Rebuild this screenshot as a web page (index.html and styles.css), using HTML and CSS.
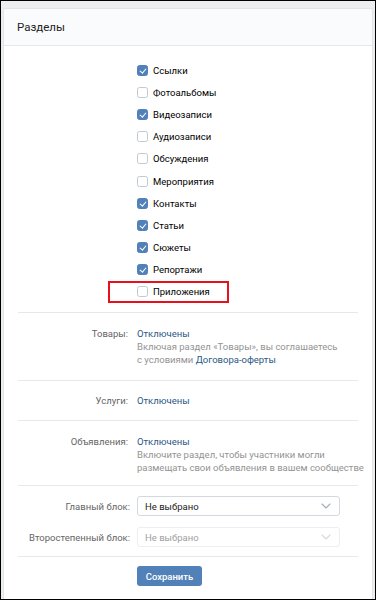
FILE: index.html
```html
<!DOCTYPE html>
<html lang="ru">
<head>
<meta charset="utf-8">
<title>Разделы</title>
<link rel="stylesheet" href="styles.css">
</head>
<body>
<div class="frame">
  <div class="card">
    <div class="card-header">Разделы</div>

    <div class="sections">
      <label class="row"><span class="cb on"></span>Ссылки</label>
      <label class="row"><span class="cb"></span>Фотоальбомы</label>
      <label class="row"><span class="cb on"></span>Видеозаписи</label>
      <label class="row"><span class="cb"></span>Аудиозаписи</label>
      <label class="row"><span class="cb"></span>Обсуждения</label>
      <label class="row"><span class="cb"></span>Мероприятия</label>
      <label class="row"><span class="cb on"></span>Контакты</label>
      <label class="row"><span class="cb on"></span>Статьи</label>
      <label class="row"><span class="cb on"></span>Сюжеты</label>
      <label class="row"><span class="cb on"></span>Репортажи</label>
      <label class="row marked"><span class="cb"></span>Приложения<span class="highlight"></span></label>
    </div>

    <div class="divider"></div>

    <div class="info">
      <div class="label">Товары:</div>
      <div class="value">
        <a class="link">Отключены</a>
        <div class="desc">Включая раздел «Товары», вы соглашаетесь<br>с условиями <a class="link">Договора-оферты</a></div>
      </div>
    </div>

    <div class="divider"></div>

    <div class="info compact">
      <div class="label">Услуги:</div>
      <div class="value"><a class="link">Отключены</a></div>
    </div>

    <div class="divider"></div>

    <div class="info last">
      <div class="label">Объявления:</div>
      <div class="value">
        <a class="link">Отключены</a>
        <div class="desc">Включите раздел, чтобы участники могли<br>размещать свои объявления в вашем сообществе</div>
      </div>
    </div>

    <div class="divider"></div>

    <div class="blocks">
      <div class="field">
        <div class="label">Главный блок:</div>
        <div class="select">Не выбрано<svg class="chev" viewBox="0 0 10 6" width="10" height="6"><path d="M1 1l4 4 4-4" fill="none" stroke="currentColor" stroke-width="1.1" stroke-linecap="round" stroke-linejoin="round"/></svg></div>
      </div>
      <div class="field">
        <div class="label">Второстепенный блок:</div>
        <div class="select disabled">Не выбрано<svg class="chev" viewBox="0 0 10 6" width="10" height="6"><path d="M1 1l4 4 4-4" fill="none" stroke="currentColor" stroke-width="1.1" stroke-linecap="round" stroke-linejoin="round"/></svg></div>
      </div>
    </div>

    <div class="divider"></div>

    <div class="actions">
      <button class="btn">Сохранить</button>
    </div>
  </div>
</div>
</body>
</html>
```

FILE: styles.css
```css
html, body {
  margin: 0;
  padding: 0;
  background: #edeef0;
}

body {
  font-family: Roboto, "Open Sans", "Liberation Sans", sans-serif;
  font-size: 9.5px;
  color: #000;
}

.frame {
  width: 376px;
  height: 600px;
  box-sizing: border-box;
  border: 1px solid #000;
  background: #edeef0;
  padding: 7px 2px 0;
  overflow: hidden;
}

.card {
  height: 100%;
  background: #fff;
  border: 1px solid #e3e4e8;
  border-bottom: none;
  border-radius: 3px 3px 0 0;
}

.card-header {
  height: 37px;
  box-sizing: border-box;
  background: #fafbfc;
  border-bottom: 1px solid #e7e8ec;
  border-radius: 3px 3px 0 0;
  padding-left: 13px;
  display: flex;
  align-items: center;
  font-size: 11.5px;
  color: #222;
}

.sections {
  padding: 13px 0 9px 133px;
  display: flex;
  flex-direction: column;
}

.row {
  position: relative;
  height: 22.2px;
  display: flex;
  align-items: center;
  color: #000;
}

.cb {
  width: 11px;
  height: 11px;
  box-sizing: border-box;
  border: 1px solid #c1c9d1;
  border-radius: 2.5px;
  background: #fff;
  margin-right: 5px;
  position: relative;
  flex: none;
}

.cb.on {
  background: #5181b8;
  border-color: #5181b8;
}

.cb.on::after {
  content: "";
  position: absolute;
  left: 2.6px;
  top: 1.2px;
  width: 2.6px;
  height: 5px;
  border-right: 1.4px solid #fff;
  border-bottom: 1.4px solid #fff;
  transform: rotate(40deg);
}

.highlight {
  position: absolute;
  left: -29px;
  top: 0;
  width: 121px;
  height: 22px;
  box-sizing: border-box;
  border: 2px solid #e8101a;
}

.divider {
  height: 1px;
  background: #e7e8ec;
  margin: 0 14px;
}

.info {
  display: grid;
  grid-template-columns: 124px 1fr;
  column-gap: 9px;
  padding: 14px 0;
  line-height: 13px;
}

.info.compact {
  padding: 13px 0;
}

.info.last {
  padding: 14px 0 11px;
}

.label {
  text-align: right;
  color: #656565;
}

.link {
  color: #2a5885;
  text-decoration: none;
}

.desc {
  color: #939393;
}

.blocks {
  padding: 10px 0 9px;
  display: flex;
  flex-direction: column;
  gap: 11px;
}

.field {
  display: grid;
  grid-template-columns: 126px 203px;
  column-gap: 7px;
  align-items: center;
}

.select {
  position: relative;
  height: 20px;
  box-sizing: border-box;
  border: 1px solid #d3d9de;
  border-radius: 3px;
  padding-left: 7px;
  display: flex;
  align-items: center;
  color: #222;
  background: #fff;
}

.select .chev {
  position: absolute;
  right: 8px;
  top: 6px;
  color: #a5adb8;
}

.select.disabled {
  border-color: #eceef1;
  color: #a0a0a0;
}

.select.disabled .chev {
  color: #d5d9de;
}

.actions {
  padding: 9px 0 0 133px;
}

.btn {
  width: 65px;
  height: 20px;
  border: none;
  border-radius: 3px;
  background: #5181b8;
  color: #fff;
  font-family: inherit;
  font-size: 9.5px;
  font-weight: 500;
  padding: 0;
  cursor: pointer;
}
```
